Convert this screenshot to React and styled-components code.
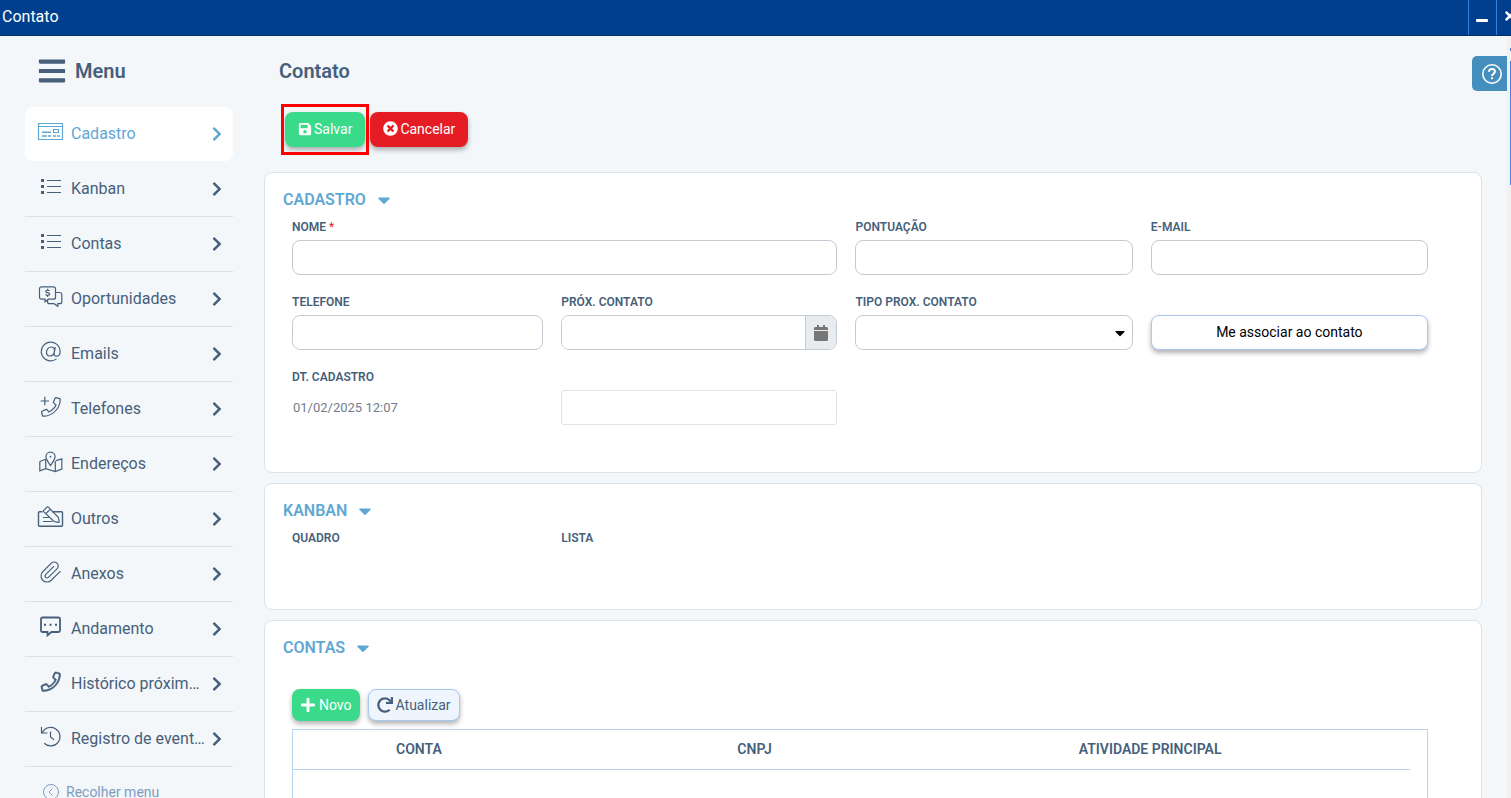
import React, { useState } from 'react'
import styled, { createGlobalStyle, css } from 'styled-components'
import { FaBars, FaCalendar, FaCaretDown, FaChevronRight, FaPlus, FaRedo, FaSave, FaTimes, FaTimesCircle } from 'react-icons/fa'

const PHONE = 'M487.8 24.1L387 .8c-14.7-3.4-29.8 4.2-35.8 18.1l-46.5 108.5c-5.5 12.7-1.8 27.7 8.9 36.5l53.9 44.1c-34 69.2-90.3 125.6-159.6 159.6l-44.1-53.9c-8.8-10.7-23.8-14.4-36.5-8.9L18.9 351.3C5 357.2-2.6 372.3.8 387L24 487.7C27.3 502 39.9 512 54.5 512 306.7 512 512 307.8 512 54.5c0-14.6-10-27.2-24.2-30.4zM55.1 480l-23-99.6 107.4-46 59.5 72.8c103.6-48.6 159.7-104.9 208.1-208.1l-72.8-59.5 46-107.4 99.6 23C479.7 289.7 289.6 479.7 55.1 480z'

const icons = {
  card: (
    <>
      <path d="M1.5 3.5h24v16h-24zM1.5 6.500h24M16.500 9.500h5v3h-5z" />
      <path d="M5 12.200h9M5 16h5M11 16h3M16 16h3M20 16h3" strokeWidth="1.500" />
    </>
  ),
  list: (
    <>
      <path d="M10 5.5h14M10 11.5h14M10 17.5h14" />
      <path d="M4 4h3v3H4zM4 10h3v3H4zM4 16h3v3H4z" fill="currentColor" stroke="none" />
    </>
  ),
  deals: (
    <>
      <path d="M4.5 1.8h12a2 2 0 0 1 2 2v8.4a2 2 0 0 1-2 2h-5l-3.5 2.6v-2.6H4.5a2 2 0 0 1-2-2V3.8a2 2 0 0 1 2-2z" />
      <path d="M18.5 7.5h4.3a2 2 0 0 1 2 2v7.2a2 2 0 0 1-2 2h-2v2.6l-3.8-2.6h-4.5a2 2 0 0 1-2-2v-2" />
      <path d="M12.5 5.9c-.6-.8-3.6-1.1-3.7.5 0 1.7 3.9.9 3.9 2.7 0 1.7-3.2 1.5-4.1.4M10.6 3.8v1.3M10.6 10.4v1.5" />
    </>
  ),
  at: (
    <path d="M19.5 18.900a9.400 9.400 0 1 1 3.600-7.500c0 3-1.500 4.800-3.700 4.800-1.900 0-2.600-1.200-2.200-3.200l1.100-5.800M17.500 10.400c0 3-1.900 5.600-4.500 5.600-2.100 0-3.500-1.500-3.500-3.700 0-3 2.100-5.300 4.600-5.300 2 0 3.400 1.300 3.400 3.400z" />
  ),
  phonePlus: (
    <>
      <path d={PHONE} transform="translate(4 2) scale(.0388)" fill="currentColor" stroke="none" />
      <path d="M7.8 1.8v8.4M3.6 6h8.4" />
    </>
  ),
  map: (
    <>
      <path d="M13.5 15.5c-1.5-2.4-4.6-5.8-4.6-8.7a4.6 4.6 0 0 1 9.2 0c0 2.9-3.1 6.3-4.6 8.700z" />
      <circle cx="13.5" cy="6.7" r=".9" fill="currentColor" stroke="none" />
      <path d="M8.7 9.3l-5.2 1.9a1 1 0 0 0-.7 1v8.6l5.9-2.1 9.600 2.800 6.500-2.400V8.900l-5.800 1.700M8.700 9.500v9.200M18.300 11v10.500" />
    </>
  ),
  edit: (
    <>
      <path d="M5.5 6.8h-3a1 1 0 0 0-1 1v12.400a1 1 0 0 0 1 1h22a1 1 0 0 0 1-1V7.800a1 1 0 0 0-1-1H15" strokeWidth="1.400" />
      <path d="M6.8 5.400l2.800-3a1.500 1.500 0 0 1 2 0l9.700 9.900.9 4.100a.8.800 0 0 1-1 1l-4.100-.9L6.800 6.900a1.200 1.200 0 0 1 0-1.500zM8.900 8.500l4-3.900M6 12.500h6M6 16.500h9.500" />
    </>
  ),
  clip: (
    <path
      d="m21.44 11.05-9.19 9.19a6 6 0 0 1-8.49-8.49l8.57-8.57A4 4 0 1 1 18 8.84l-8.59 8.57a2 2 0 0 1-2.83-2.83l8.49-8.48"
      transform="translate(2 0)"
    />
  ),
  comment: (
    <>
      <path d="M5.5 2.5h16a1.5 1.5 0 0 1 1.500 1.500v11.500a1.500 1.500 0 0 1-1.500 1.500h-7l-4 3.300V17H5.500A1.500 1.500 0 0 1 4 15.500V4a1.500 1.500 0 0 1 1.500-1.500z" strokeWidth="1.800" />
      <path d="M7 8.700h2v2H7zM12.500 8.700h2v2h-2zM18 8.700h2v2h-2z" fill="currentColor" stroke="none" />
    </>
  ),
  phone: (
    <path d={PHONE} transform="translate(4 2) scale(.038)" fill="currentColor" strokeWidth="20" />
  ),
  history: <path d="M4.5 2v6h6M5.2 7.8a9.3 9.3 0 1 1 2 10.500M13.500 6.500v5.500l3.500 2.700" />,
}

const menu = [
  { label: 'Cadastro', icon: 'card' },
  { label: 'Kanban', icon: 'list' },
  { label: 'Contas', icon: 'list' },
  { label: 'Oportunidades', icon: 'deals' },
  { label: 'Emails', icon: 'at' },
  { label: 'Telefones', icon: 'phonePlus' },
  { label: 'Endereços', icon: 'map' },
  { label: 'Outros', icon: 'edit' },
  { label: 'Anexos', icon: 'clip' },
  { label: 'Andamento', icon: 'comment' },
  { label: 'Histórico próximo contato', icon: 'phone' },
  { label: 'Registro de eventos', icon: 'history' },
]

const MenuIcon = ({ name }) => (
  <svg width="28" height="28" viewBox="0 0 28 28" fill="none" stroke="currentColor" strokeWidth="1.2" aria-hidden="true">
    {icons[name]}
  </svg>
)

const SectionTitle = ({ children }) => (
  <Title>
    {children}
    <FaCaretDown size={20} />
  </Title>
)

const App = () => {
  const [active, setActive] = useState('Cadastro')
  return (
    <Window>
      <GlobalStyle />
      <TitleBar>
        <span>Contato</span>
        <WindowControls>
          <button aria-label="Minimizar"><i /></button>
          <button aria-label="Fechar"><FaTimes size={14} /></button>
        </WindowControls>
      </TitleBar>
      <Body>
        <Sidebar>
          <MenuTitle>
            <FaBars size={30} />
            Menu
          </MenuTitle>
          <ul>
            {menu.map((item) => (
              <li key={item.label}>
                <MenuLink href="#" $active={active === item.label} onClick={() => setActive(item.label)}>
                  <MenuIcon name={item.icon} />
                  <span>{item.label}</span>
                  <FaChevronRight size={16} />
                </MenuLink>
              </li>
            ))}
          </ul>
          <Collapse>
            <svg width="18" height="18" viewBox="0 0 18 18" fill="none" stroke="currentColor" aria-hidden="true">
              <circle cx="9" cy="9" r="7.5" />
              <path d="M10.5 5.5L7 9l3.5 3.5" />
            </svg>
            Recolher menu
          </Collapse>
        </Sidebar>

        <Main>
          <h1>Contato</h1>
          <Actions>
            <Highlight>
              <Button $kind="success"><FaSave size={14} />Salvar</Button>
            </Highlight>
            <Button $kind="danger"><FaTimesCircle size={15} />Cancelar</Button>
          </Actions>

          <Panel>
            <SectionTitle>CADASTRO</SectionTitle>
            <Fields>
              <Field $span={2}>
                <label htmlFor="nome">NOME <em>*</em></label>
                <Input id="nome" required />
              </Field>
              <Field>
                <label htmlFor="pontuacao">PONTUAÇÃO</label>
                <Input id="pontuacao" />
              </Field>
              <Field>
                <label htmlFor="email">E-MAIL</label>
                <Input id="email" type="email" />
              </Field>
              <Field>
                <label htmlFor="telefone">TELEFONE</label>
                <Input id="telefone" type="tel" />
              </Field>
              <Field>
                <label htmlFor="proximo">PRÓX. CONTATO</label>
                <DateGroup>
                  <input id="proximo" />
                  <button aria-label="Abrir calendário"><FaCalendar size={16} /></button>
                </DateGroup>
              </Field>
              <Field>
                <label htmlFor="tipo">TIPO PROX. CONTATO</label>
                <SelectBox>
                  <select id="tipo" defaultValue=""><option value="" /></select>
                  <FaCaretDown size={16} />
                </SelectBox>
              </Field>
              <Field $end>
                <Button $kind="plain">Me associar ao contato</Button>
              </Field>
              <Field>
                <label htmlFor="cadastro">DT. CADASTRO</label>
                <output id="cadastro">01/02/2025 12:07</output>
              </Field>
              <Field $end>
                <Input $light aria-label="Complemento" />
              </Field>
            </Fields>
          </Panel>

          <Panel>
            <SectionTitle>KANBAN</SectionTitle>
            <Fields>
              <Field><strong>QUADRO</strong></Field>
              <Field><strong>LISTA</strong></Field>
            </Fields>
          </Panel>

          <Panel>
            <SectionTitle>CONTAS</SectionTitle>
            <Toolbar>
              <Button $kind="success" $small><FaPlus size={16} />Novo</Button>
              <Button $kind="info" $small><FaRedo size={16} />Atualizar</Button>
            </Toolbar>
            <TableBox>
              <table>
                <thead>
                  <tr>
                    <td />
                    <th scope="col">CONTA</th>
                    <th scope="col">CNPJ</th>
                    <th scope="col">ATIVIDADE PRINCIPAL</th>
                  </tr>
                </thead>
              </table>
            </TableBox>
          </Panel>
        </Main>

        <ScrollTrack><i /><b /></ScrollTrack>
        <Help aria-label="Ajuda">
          <svg width="22" height="22" viewBox="0 0 22 22" fill="none" stroke="currentColor" strokeWidth="1.6" aria-hidden="true">
            <circle cx="11" cy="11" r="9.2" />
            <path d="M8 8.700C8 7.100 9.300 6.100 11 6.100s3 1 3 2.500c0 2.300-3 2.300-3 4.400M11 14.300v1.900" strokeWidth="2" />
          </svg>
        </Help>
      </Body>
    </Window>
  )
}

const GlobalStyle = createGlobalStyle`
  * {
    box-sizing: border-box;
  }
  body {
    margin: 0;
    overflow: hidden;
    background: #f3f7fa;
    color: #475f7b;
    font-family: Roboto, 'Liberation Sans', sans-serif;
    font-size: 14px;
  }
  button, input, select {
    font: inherit;
    color: inherit;
  }
  button {
    padding: 0;
    cursor: pointer;
  }
`

const Window = styled.div`
  display: flex;
  flex-direction: column;
  height: 100vh;
  overflow: hidden;
`

const TitleBar = styled.header`
  display: flex;
  flex: none;
  justify-content: space-between;
  height: 36px;
  background: #003f8e;
  border-bottom: 1px solid #00306f;
  color: #fff;
  span {
    padding-left: 2px;
    font-size: 16px;
    line-height: 34px;
  }
`

const WindowControls = styled.div`
  display: flex;
  width: 43px;
  overflow: hidden;
  button {
    display: flex;
    flex: none;
    align-items: center;
    justify-content: center;
    width: 28px;
    padding: 0 2px 3px 0;
    border: 0;
    border-left: 1px solid #2f80e0;
    background: none;
  }
  i {
    width: 12px;
    height: 3px;
    margin-top: 8px;
    border-radius: 1px;
    background: #fff;
  }
`

const Body = styled.div`
  display: flex;
  flex: 1;
  min-height: 0;
  position: relative;
`

const Sidebar = styled.nav`
  flex: none;
  width: 233px;
  padding: 23px 0 0 25px;
  ul {
    margin: 24px 0 0;
    padding: 0;
    list-style: none;
  }
  li {
    border-bottom: 1px solid #dbe0e5;
  }
  li:first-child {
    border-color: transparent;
  }
`

const MenuTitle = styled.div`
  display: flex;
  align-items: center;
  gap: 8px;
  height: 24px;
  padding-left: 12px;
  font-size: 20px;
  font-weight: 600;
`

const MenuLink = styled.a`
  display: flex;
  align-items: center;
  height: 54px;
  padding: 0 8px 0 12px;
  border-radius: 8px;
  color: inherit;
  font-size: 16px;
  text-decoration: none;
  ${(p) => p.$active && css`
    background: #fff;
    color: #5fa8d3;
  `}
  span {
    flex: 1;
    margin: 0 3px 0 6px;
    line-height: 20px;
    overflow: hidden;
    text-overflow: ellipsis;
    white-space: nowrap;
  }
  svg {
    flex: none;
  }
`

const Collapse = styled.button`
  display: flex;
  align-items: center;
  gap: 6px;
  margin: 16px 0 0 17px;
  border: 0;
  background: none;
  color: #7f9cbf;
`

const Main = styled.main`
  flex: 1;
  min-width: 0;
  padding: 23px 25px 0 31px;
  h1 {
    margin: 0 0 29px;
    padding-left: 15px;
    font-size: 20px;
    font-weight: 600;
    line-height: 24px;
  }
`

const Actions = styled.div`
  display: flex;
  gap: 5px;
  margin-bottom: 25px;
  padding-left: 21px;
`

/* red frame drawn round the button */
const Highlight = styled.div`
  position: relative;
  &::after {
    content: '';
    position: absolute;
    inset: -8px -4px;
    border: 3px solid #f00;
    pointer-events: none;
  }
`

const kinds = {
  success: css`
    background: #39da8a;
    color: #fff;
  `,
  danger: css`
    background: #e61c24;
    color: #fff;
  `,
  info: css`
    background: #eef5fd;
    border: 1px solid #a9c8f0;
  `,
  plain: css`
    width: 100%;
    background: #fff;
    border: 1px solid #a9c8f0;
    color: #000;
  `,
}

const Button = styled.button`
  display: flex;
  align-items: center;
  justify-content: center;
  gap: ${(p) => (p.$small ? 3 : 2)}px;
  height: ${(p) => (p.$small ? 32 : 35)}px;
  padding: ${(p) => (p.$small ? '0 8px' : '0 13px 2px')};
  border: 0;
  border-radius: 8px;
  box-shadow: 0 3px 5px rgba(0, 0, 0, 0.3);
  ${(p) => kinds[p.$kind]}
`

const Panel = styled.section`
  margin-bottom: 10px;
  padding: 17px 53px 47px 27px;
  border: 1px solid #dde2e7;
  border-radius: 8px;
  background: #fff;
  &:nth-of-type(2) {
    padding-bottom: 63px;
  }
  &:last-child {
    min-height: 400px;
  }
`

const Title = styled.h2`
  display: flex;
  align-items: center;
  gap: 8px;
  margin: 0 0 9px -9px;
  color: #5fa8d3;
  font-size: 16px;
  font-weight: 600;
  line-height: 20px;
`

const Fields = styled.div`
  display: grid;
  grid-template-columns: 251fr 276fr 277fr 277fr;
  gap: 19px 18px;
`

const Field = styled.div`
  display: flex;
  flex-direction: column;
  gap: 5px;
  min-width: 0;
  grid-column: span ${(p) => p.$span || 1};
  justify-content: ${(p) => (p.$end ? 'flex-end' : 'flex-start')};
  label, strong {
    font-size: 12px;
    font-weight: 600;
    line-height: 16px;
  }
  em {
    color: #e61c24;
    font-style: normal;
    font-weight: 400;
  }
  output {
    padding-left: 1px;
    color: #727e8c;
    font-size: 13px;
    line-height: 35px;
  }
`

const Input = styled.input`
  width: 100%;
  height: 35px;
  padding: 0 10px;
  border: 1px solid ${(p) => (p.$light ? '#dfe3e7' : '#c5cad3')};
  border-radius: ${(p) => (p.$light ? 3 : 8)}px;
  background: #fff;
`

const DateGroup = styled.div`
  display: flex;
  height: 35px;
  border: 1px solid #c5cad3;
  border-radius: 8px;
  overflow: hidden;
  input {
    flex: 1;
    min-width: 0;
    padding: 0 10px;
    border: 0;
  }
  button {
    display: flex;
    align-items: center;
    justify-content: center;
    width: 31px;
    border: 0;
    border-left: 1px solid #c5cad3;
    background: #e9ecef;
    color: #777;
  }
`

const SelectBox = styled.div`
  display: grid;
  align-items: center;
  color: #000;
  select {
    grid-area: 1 / 1;
    width: 100%;
    height: 35px;
    padding: 0 24px 0 10px;
    border: 1px solid #c5cad3;
    border-radius: 8px;
    background: #fff;
    appearance: none;
  }
  svg {
    grid-area: 1 / 1;
    justify-self: end;
    margin-right: 5px;
    pointer-events: none;
  }
`

const Toolbar = styled.div`
  display: flex;
  gap: 8px;
  margin: 31px 0 8px;
`

const TableBox = styled.div`
  min-height: 200px;
  padding-right: 17px;
  border: 1px solid #b9d3f3;
  table {
    width: 100%;
    table-layout: fixed;
    border-collapse: collapse;
  }
  td, th {
    height: 39px;
    padding: 0 10px;
    border-bottom: 1px solid #b9d3f3;
    font-size: 14px;
    font-weight: 600;
    text-align: left;
  }
  td {
    width: 93px;
  }
`

const ScrollTrack = styled.div`
  display: flex;
  flex: none;
  flex-direction: column;
  align-items: flex-end;
  width: 4px;
  padding-top: 12px;
  background: #f1f1f1;
  i, b {
    width: 1px;
    height: 3px;
    background: #4a7fe8;
  }
  b {
    height: 124px;
    margin-top: 10px;
  }
`

const Help = styled.button`
  display: flex;
  align-items: center;
  justify-content: center;
  position: absolute;
  top: 20px;
  right: 4px;
  width: 35px;
  height: 35px;
  padding-left: 5px;
  border: 0;
  border-radius: 5px 0 0 5px;
  background: #448fbd;
  color: #fff;
`

export default App
